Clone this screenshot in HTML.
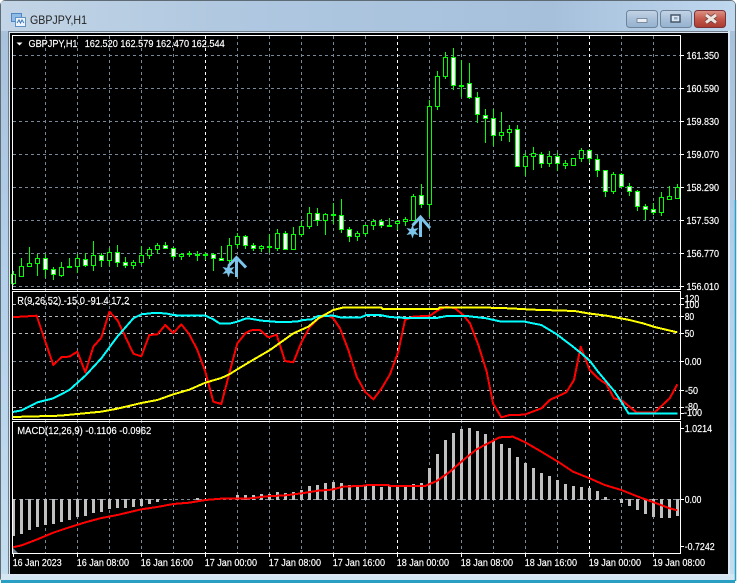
<!DOCTYPE html>
<html><head><meta charset="utf-8"><title>GBPJPY,H1</title>
<style>
html,body{margin:0;padding:0;background:#fff;width:738px;height:584px;overflow:hidden}
svg{display:block}
text{font-family:"Liberation Sans",sans-serif;font-size:10.5px;fill:#fff;stroke:#fff;stroke-width:.18px}
.c{shape-rendering:crispEdges}
</style></head><body>
<svg width="738" height="584" viewBox="0 0 738 584" xmlns="http://www.w3.org/2000/svg">
<defs>
<linearGradient id="fr" x1="0" y1="0" x2="0" y2="1"><stop offset="0" stop-color="#b4cbe2"/><stop offset=".06" stop-color="#a9c2dc"/><stop offset=".5" stop-color="#b4d0ea"/><stop offset="1" stop-color="#c4deef"/></linearGradient>
<linearGradient id="tb" x1="0" y1="0" x2="1" y2="0"><stop offset="0" stop-color="#c3d5e6"/><stop offset=".3" stop-color="#b0c8e0"/><stop offset=".75" stop-color="#a6c0dc"/><stop offset="1" stop-color="#c0d8ee"/></linearGradient>
<linearGradient id="bt" x1="0" y1="0" x2="0" y2="1"><stop offset="0" stop-color="#c3d4e6"/><stop offset=".5" stop-color="#a9c0d9"/><stop offset="1" stop-color="#94b2d0"/></linearGradient>
<linearGradient id="cl" x1="0" y1="0" x2="0" y2="1"><stop offset="0" stop-color="#dc9488"/><stop offset=".5" stop-color="#c4574a"/><stop offset="1" stop-color="#a83a30"/></linearGradient>
</defs>
<!-- window -->
<rect x=".5" y=".5" width="735" height="582" rx="5" fill="url(#fr)" stroke="#5f6b75"/>
<path d="M1 2.5Q1 1 5 1H731Q735 1 735 5V31H1z" fill="url(#tb)"/>
<rect x="1" y="574" width="734" height="6" fill="#d3e6f2"/>
<path d="M1 581.5H735" stroke="#2a9fc4" stroke-width="3"/>
<path d="M735.5 200V581" stroke="#2a9fc4" stroke-width="1.5"/>
<rect x="8" y="31" width="722" height="545" fill="#dbe7f2"/>
<path d="M8 31.5H728M8.5 31V574" stroke="#6f7c89" fill="none"/>
<rect x="10" y="33" width="718" height="541" fill="#000"/>
<!-- title icon -->
<rect x="11.5" y="13.5" width="10" height="8" fill="#8fbbe6" stroke="#4f86c0"/>
<rect x="15.5" y="17.5" width="10" height="9" fill="#eef4fb" stroke="#5f93c8"/>
<path d="M17 23l2-3 1.500 3 1.500-3 2 3" stroke="#3a78b8" fill="none"/>
<text x="30" y="24" style="font-size:12px;fill:#222;stroke:none" textLength="57" lengthAdjust="spacingAndGlyphs">GBPJPY,H1</text>
<!-- buttons -->
<rect x="626.500" y="10.500" width="31" height="17" rx="3" fill="url(#bt)" stroke="#6f8499"/>
<rect x="660.500" y="10.500" width="31" height="17" rx="3" fill="url(#bt)" stroke="#6f8499"/>
<rect x="694.500" y="10.500" width="31" height="17" rx="3" fill="url(#cl)" stroke="#7a3238"/>
<rect x="637" y="18.500" width="10" height="4" fill="#e8eef4" stroke="#6a7a8c" stroke-width=".8"/>
<rect x="671" y="15" width="9" height="7" fill="#dfe8f1" stroke="#46586b" stroke-width="1.500"/>
<rect x="674" y="17" width="3.500" height="2.500" fill="#8ea9c4"/>
<path d="M706 15L716 22.500M716 15L706 22.500" stroke="#5f3a3a" stroke-width="4.500"/>
<path d="M706 15L716 22.500M716 15L706 22.500" stroke="#eee4e0" stroke-width="3"/>

<!-- grid -->
<g class="c" fill="none" stroke-width="1">
<path stroke="#778899" stroke-dasharray="3 3" d="M13 55.500H680M13 88.500H680M13 121.500H680M13 154.500H680M13 187.500H680M13 220.500H680M13 253.500H680M13 286.500H680M13 361.500H680"/>
<path stroke="#b8b8b8" stroke-dasharray="3 3" d="M13 304.500H680M13 316.500H680M13 333.500H680M13 390.500H680M13 407.500H680"/>
<path stroke="#808a94" stroke-dasharray="3 3" d="M13 499.500H680"/>
<path stroke="#778899" stroke-dasharray="3 3" d="M45.500 36V553M77.500 36V553M109.500 36V553M141.500 36V553M173.500 36V553M237.500 36V553M269.500 36V553M301.500 36V553M333.500 36V553M365.500 36V553M429.500 36V553M461.500 36V553M493.500 36V553M525.500 36V553M557.500 36V553M621.500 36V553M653.500 36V553"/>
<path stroke="#fff" stroke-dasharray="3 3" d="M205.500 36V553M397.500 36V553M589.500 36V553"/>
</g>

<!-- wicks -->
<path class="c" fill="none" stroke="#00ff00" d="M13.500 271V285M21.500 258V277M29.500 247V267M37.500 254V276M45.500 254V278M53.500 267V280M61.500 262V277M69.500 258V268M77.500 254V273M85.500 253V267M93.500 241V271M101.500 253V267M109.500 248V266M117.500 245V267M125.500 257V268M133.500 260V269M141.500 246V265M149.500 247V259M157.500 243V254M165.500 242V249M173.500 247V259M181.500 253V260M189.500 251V257M197.500 251V261M205.500 252V260M213.500 253V271M221.500 246V261M229.500 238V266M237.500 233V248M245.500 235V249M253.500 243V251M261.500 245V252M269.500 234V253M277.500 229V251M285.500 231V250M293.500 227V250M301.500 221V237M309.500 207V229M317.500 208V226M325.500 213V235M333.500 203V224M341.500 199V233M349.500 227V242M357.500 231V241M365.500 225V236M373.500 219V230M381.500 219V228M389.500 218V226M397.500 220V230M405.500 217V226M413.500 194V220M421.500 184V208M429.500 100V217M437.500 71V110M445.500 52V79M453.500 48V90M461.500 60V97M469.500 63V99M477.500 92V123M485.500 109V143M493.500 109V146M501.500 112V141M509.500 125V142M517.500 125V167M525.500 153V176M533.500 147V170M541.500 152V168M549.500 151V167M557.500 153V171M565.500 160V169M573.500 158V165M581.500 148V162M589.500 149V163M597.500 155V177M605.500 170V197M613.500 172V194M621.500 173V188M629.500 183V196M637.500 190V211M645.500 204V220M653.500 203V215M661.500 192V216M669.500 186V200M677.500 184V199"/>
<!-- hollow bodies -->
<path class="c" fill="#000" stroke="#00ff00" d="M11.500 274.500h4v9h-4zM19.500 266.500h4v10h-4zM27.500 263.500h4v3h-4zM35.500 258.500h4v5h-4zM59.500 267.500h4v8h-4zM67.500 266.500h4v1h-4zM75.500 258.500h4v8h-4zM91.500 255.500h4v10h-4zM107.500 252.500h4v8h-4zM131.500 262.500h4v3h-4zM139.500 255.500h4v7h-4zM147.500 249.500h4v6h-4zM155.500 245.500h4v4h-4zM179.500 254.500h4v2h-4zM187.500 253.500h4v1h-4zM195.500 254.500h4v1h-4zM203.500 254.500h4v1h-4zM227.500 245.500h4v15h-4zM235.500 236.500h4v8h-4zM259.500 246.500h4v2h-4zM267.500 246.500h4v1h-4zM275.500 233.500h4v15h-4zM291.500 234.500h4v15h-4zM299.500 226.500h4v8h-4zM307.500 213.500h4v13h-4zM323.500 214.500h4v6h-4zM331.500 214.500h4v1h-4zM355.500 233.500h4v3h-4zM363.500 225.500h4v8h-4zM371.500 221.500h4v4h-4zM387.500 225.500h4v1h-4zM395.500 221.500h4v2h-4zM403.500 219.500h4v2h-4zM411.500 196.500h4v24h-4zM427.500 106.500h4v98h-4zM435.500 76.500h4v30h-4zM443.500 57.500h4v19h-4zM459.500 85.500h4v1h-4zM499.500 132.500h4v3h-4zM507.500 129.500h4v3h-4zM523.500 156.500h4v10h-4zM531.500 153.500h4v3h-4zM547.500 156.500h4v7h-4zM563.500 163.500h4v2h-4zM571.500 158.500h4v7h-4zM579.500 150.500h4v8h-4zM611.500 174.500h4v17h-4zM659.500 197.500h4v15h-4zM667.500 196.500h4v3h-4zM675.500 187.500h4v11h-4z"/>
<!-- filled bodies -->
<path class="c" fill="#fff" stroke="#00ff00" d="M43.500 258.500h4v11h-4zM51.500 269.500h4v5h-4zM83.500 259.500h4v6h-4zM99.500 255.500h4v5h-4zM115.500 252.500h4v10h-4zM123.500 262.500h4v3h-4zM163.500 245.500h4v3h-4zM171.500 248.500h4v8h-4zM211.500 254.500h4v4h-4zM219.500 258.500h4v2h-4zM243.500 236.500h4v9h-4zM251.500 245.500h4v3h-4zM283.500 233.500h4v16h-4zM315.500 213.500h4v7h-4zM339.500 215.500h4v14h-4zM347.500 229.500h4v7h-4zM379.500 221.500h4v4h-4zM419.500 195.500h4v9h-4zM451.500 57.500h4v28h-4zM467.500 83.500h4v14h-4zM475.500 97.500h4v17h-4zM483.500 115.500h4v3h-4zM491.500 118.500h4v17h-4zM515.500 129.500h4v37h-4zM539.500 154.500h4v9h-4zM555.500 156.500h4v7h-4zM587.500 150.500h4v8h-4zM595.500 159.500h4v11h-4zM603.500 170.500h4v21h-4zM619.500 174.500h4v12h-4zM627.500 186.500h4v5h-4zM635.500 191.500h4v15h-4zM643.500 206.500h4v3h-4zM651.500 209.500h4v3h-4z"/>

<!-- arrows + stars -->
<g fill="none" stroke="#7cc4ea" stroke-width="3">
<path d="M228.500 266L236.500 257.500L246 267.500M236.500 258V277"/>
<path d="M412.500 225.500L420.500 217L430 228M420.500 217V237"/>
</g>
<g fill="#7cc4ea">
<polygon transform="translate(228.500,270.500)" points="0,-7 1.500,-2.600 6.060,-3.500 3,0 6.060,3.500 1.500,2.600 0,7 -1.500,2.600 -6.060,3.500 -3,0 -6.060,-3.500 -1.500,-2.600"/>
<polygon transform="translate(412.500,231.500)" points="0,-7 1.500,-2.600 6.060,-3.500 3,0 6.060,3.500 1.500,2.600 0,7 -1.500,2.600 -6.060,3.500 -3,0 -6.060,-3.500 -1.500,-2.600"/>
</g>

<!-- RSI lines -->
<g fill="none" stroke-width="6" stroke-linejoin="round" class="c">
<g stroke="#ff0000">
<polyline transform="translate(0,285) scale(.33333)" points="38,96 65,95 110,92 136,170 160,240 185,216 208,215 232,200 256,262 280,185 304,158 328,80 352,105 376,155 400,206 424,214 448,150 472,148 496,120 520,144 544,118 568,148 592,195 616,260 640,350 664,357 688,265 712,175 736,145 750,137"/>
<polyline transform="translate(250,285) scale(.33333)" points="0,137 10,135 30,135 55,157 80,149 105,228 130,232 155,170 180,125 205,100 230,90 250,100 270,130 295,195 320,275 345,320 370,343 395,310 420,268 445,200 465,105 490,95 540,92 565,75 590,65 615,70 640,90 660,115 685,180 710,260 714,280"/>
<polyline transform="translate(488,285) scale(.33333)" points="0,280 15,355 40,397 65,390 110,389 160,370 185,345 235,322 258,285 278,185 305,255 330,280 355,297 378,340 400,345 445,382 500,382 545,340 568,298"/>
</g>
<g stroke="#00ffff">
<polyline transform="translate(0,285) scale(.33333)" points="38,381 65,376 112,352 160,340 208,315 256,272 304,220 352,155 400,100 424,88 460,84 496,85 520,90 544,92 616,92 640,103 660,116 688,116 712,110 736,101 750,101"/>
<polyline transform="translate(250,285) scale(.33333)" points="0,101 35,107 85,111 140,110 160,105 185,103 205,93 250,92 275,98 330,98 350,90 390,90 420,96 470,99 560,99 590,93 650,93 710,100 714,101"/>
<polyline transform="translate(488,285) scale(.33333)" points="0,101 40,110 110,110 160,120 205,147 255,185 280,205 305,227 330,260 355,290 380,320 400,350 422,386 568,386"/>
</g>
<g stroke="#ffff00">
<polyline transform="translate(0,285) scale(.33333)" points="38,396 110,394 180,392 232,387 304,380 352,371 424,354 472,345 520,328 568,314 616,293 664,279 688,268 712,253 750,230"/>
<polyline transform="translate(250,285) scale(.33333)" points="0,230 60,195 130,145 175,125 205,100 250,75 278,68 395,68 398,72 565,72 568,68 714,68"/>
<polyline transform="translate(488,285) scale(.33333)" points="0,68 65,70 135,74 260,78 300,85 355,92 420,104 465,115 500,126 568,142"/>
</g>
</g>

<!-- MACD bars -->
<path class="c" fill="none" stroke="#c0c0c0" stroke-width="3" d="M13.500 499v37M21.500 499v35M29.500 499v31M37.500 499v28M45.500 499v26M53.500 499v25M61.500 499v23M69.500 499v21M77.500 499v18M85.500 499v17M93.500 499v14M101.500 499v13M109.500 499v10M117.500 499v9M125.500 499v9M133.500 499v8M141.500 499v7M149.500 499v5M157.500 499v3M165.500 499v1M197.500 500v-2M237.500 500v-5M245.500 500v-5M253.500 500v-5M261.500 500v-6M269.500 500v-6M277.500 500v-8M285.500 500v-7M293.500 500v-8M301.500 500v-10M309.500 500v-14M317.500 500v-15M325.500 500v-17M333.500 500v-18M341.500 500v-17M349.500 500v-15M357.500 500v-14M365.500 500v-14M373.500 500v-14M381.500 500v-13M389.500 500v-14M397.500 500v-14M405.500 500v-14M413.500 500v-16M421.500 500v-17M429.500 500v-32M437.500 500v-46M445.500 500v-60M453.500 500v-67M461.500 500v-71M469.500 500v-72M477.500 500v-69M485.500 500v-66M493.500 500v-59M501.500 500v-56M509.500 500v-52M517.500 500v-43M525.500 500v-37M533.500 500v-32M541.500 500v-27M549.500 500v-24M557.500 500v-20M565.500 500v-16M573.500 500v-14M581.500 500v-13M589.500 500v-12M597.500 500v-9M605.500 500v-3M621.500 499v4M629.500 499v7M637.500 499v11M645.500 499v15M653.500 499v18M661.500 499v19M669.500 499v19M677.500 499v17"/>
<polygon points="13,548 18,553 13,553" fill="#778899"/>
<!-- MACD signal -->
<g fill="none" stroke="#ff0000" stroke-width="6" stroke-linejoin="round" class="c">
<polyline transform="translate(0,420) scale(.33333)" points="38,382 65,376 112,358 160,338 208,322 256,307 300,295 352,285 424,268 472,261 520,252 568,248 616,240 664,236 750,235"/>
<polyline transform="translate(250,420) scale(.33333)" points="0,235 50,229 105,226 155,220 205,212 245,209 280,200 345,197 350,195 415,195 420,198 525,198 560,183 600,155 640,120 680,88 714,70"/>
<polyline transform="translate(488,420) scale(.33333)" points="0,70 35,52 75,50 110,66 160,95 210,125 255,155 305,175 350,195 400,210 450,230 500,248 545,265 568,271"/>
</g>

<!-- frames -->
<g class="c" fill="none" stroke="#fff">
<rect x="12.500" y="35.500" width="668" height="254"/>
<rect x="12.500" y="291.500" width="668" height="128"/>
<rect x="12.500" y="421.500" width="668" height="132"/>
<path d="M681 55.500h3M681 88.500h3M681 121.500h3M681 154.500h3M681 187.500h3M681 220.500h3M681 253.500h3M681 286.500h3M681 298.500h3M681 304.500h3M681 316.500h3M681 333.500h3M681 361.500h3M681 390.500h3M681 407.500h3M681 413.500h3M681 428.500h3M681 499.500h3M681 546.500h3M13.500 554v3M77.500 554v3M141.500 554v3M205.500 554v3M269.500 554v3M333.500 554v3M397.500 554v3M461.500 554v3M525.500 554v3M589.500 554v3M653.500 554v3"/>
</g>

<!-- legends -->
<polygon points="16.500,42.500 22.500,42.500 19.500,45.500" fill="#fff"/>
<text x="28.500" y="47" textLength="49" lengthAdjust="spacingAndGlyphs">GBPJPY,H1</text>
<text x="84.700" y="47" textLength="140" lengthAdjust="spacingAndGlyphs">162.520 162.579 162.470 162.544</text>
<text x="17.300" y="304" textLength="112" lengthAdjust="spacingAndGlyphs">R(9,26,52) -15.0 -91.4 17.2</text>
<text x="17.300" y="434" textLength="134" lengthAdjust="spacingAndGlyphs">MACD(12,26,9) -0.1106 -0.0962</text>

<!-- price axis -->
<g>
<text x="686.500" y="59" textLength="32.500" lengthAdjust="spacingAndGlyphs">161.350</text>
<text x="686.500" y="92" textLength="32.500" lengthAdjust="spacingAndGlyphs">160.590</text>
<text x="686.500" y="125" textLength="32.500" lengthAdjust="spacingAndGlyphs">159.830</text>
<text x="686.500" y="158" textLength="32.500" lengthAdjust="spacingAndGlyphs">159.070</text>
<text x="686.500" y="191" textLength="32.500" lengthAdjust="spacingAndGlyphs">158.290</text>
<text x="686.500" y="224" textLength="32.500" lengthAdjust="spacingAndGlyphs">157.530</text>
<text x="686.500" y="257" textLength="32.500" lengthAdjust="spacingAndGlyphs">156.770</text>
<text x="686.500" y="290" textLength="32.500" lengthAdjust="spacingAndGlyphs">156.010</text>
<text x="684.700" y="302" textLength="14.500" lengthAdjust="spacingAndGlyphs">120</text>
<text x="684.700" y="308" textLength="14.500" lengthAdjust="spacingAndGlyphs">100</text>
<text x="684.700" y="320" textLength="9.500" lengthAdjust="spacingAndGlyphs">80</text>
<text x="684.700" y="337" textLength="9.500" lengthAdjust="spacingAndGlyphs">50</text>
<text x="684.700" y="365" textLength="16.700" lengthAdjust="spacingAndGlyphs">0.00</text>
<text x="685" y="394" textLength="13" lengthAdjust="spacingAndGlyphs">-50</text>
<text x="685" y="410" textLength="13" lengthAdjust="spacingAndGlyphs">-80</text>
<text x="684" y="416" textLength="18" lengthAdjust="spacingAndGlyphs">-100</text>
<text x="684.700" y="432" textLength="27.500" lengthAdjust="spacingAndGlyphs">1.0214</text>
<text x="684.700" y="503" textLength="16.700" lengthAdjust="spacingAndGlyphs">0.00</text>
<text x="684.700" y="550" textLength="30" lengthAdjust="spacingAndGlyphs">-0.7242</text>
</g>

<!-- time axis -->
<g>
<text x="12.700" y="566" textLength="49" lengthAdjust="spacingAndGlyphs">16 Jan 2023</text>
<text x="76.700" y="566" textLength="52.300" lengthAdjust="spacingAndGlyphs">16 Jan 08:00</text>
<text x="140.700" y="566" textLength="52.300" lengthAdjust="spacingAndGlyphs">16 Jan 16:00</text>
<text x="204.700" y="566" textLength="52.300" lengthAdjust="spacingAndGlyphs">17 Jan 00:00</text>
<text x="268.700" y="566" textLength="52.300" lengthAdjust="spacingAndGlyphs">17 Jan 08:00</text>
<text x="332.700" y="566" textLength="52.300" lengthAdjust="spacingAndGlyphs">17 Jan 16:00</text>
<text x="396.700" y="566" textLength="52.300" lengthAdjust="spacingAndGlyphs">18 Jan 00:00</text>
<text x="460.700" y="566" textLength="52.300" lengthAdjust="spacingAndGlyphs">18 Jan 08:00</text>
<text x="524.700" y="566" textLength="52.300" lengthAdjust="spacingAndGlyphs">18 Jan 16:00</text>
<text x="588.700" y="566" textLength="52.300" lengthAdjust="spacingAndGlyphs">19 Jan 00:00</text>
<text x="652.700" y="566" textLength="52.300" lengthAdjust="spacingAndGlyphs">19 Jan 08:00</text>
</g>
</svg>
</body></html>
